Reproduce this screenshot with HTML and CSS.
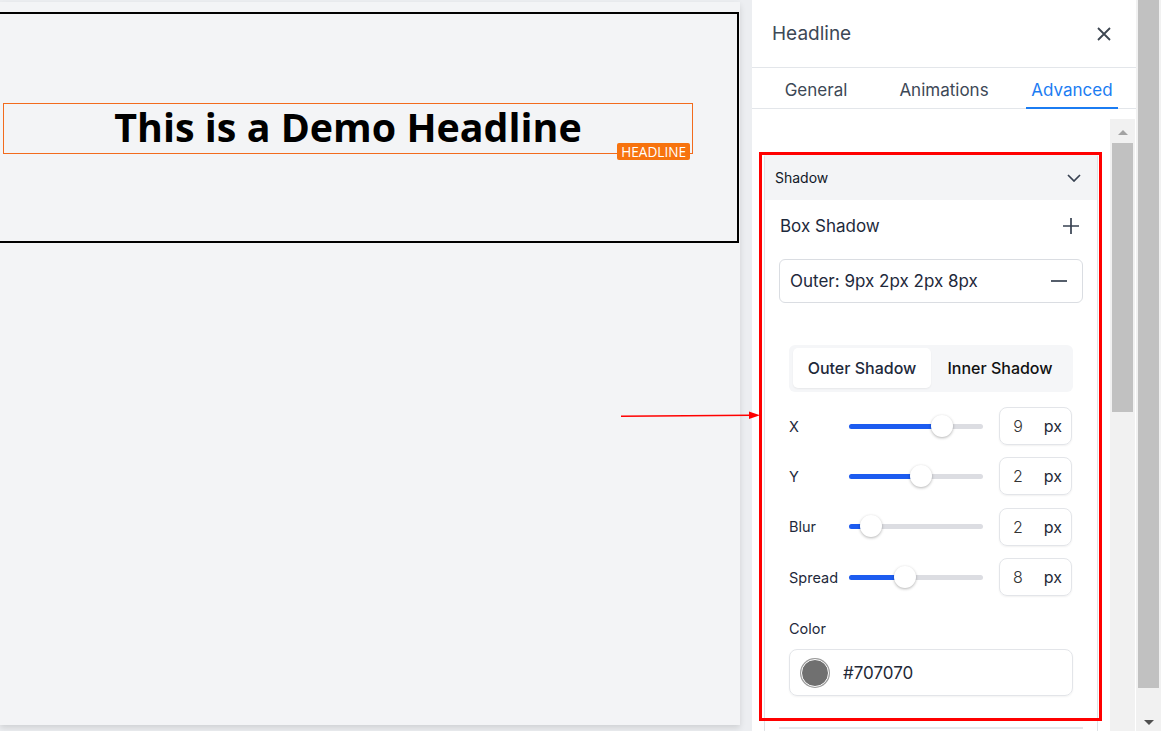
FILE: index.html
```html
<!DOCTYPE html>
<html lang="en">

<head>
    <meta charset="UTF-8">
    <meta name="viewport" content="width=device-width, initial-scale=1.0">
    <title>Headline - Advanced</title>
    <link rel="stylesheet" href="styles.css">
</head>

<body>
    <div class="app">
        <main class="stage">
            <div class="page">
                <section class="block">
                    <div class="headline-box">
                        <h1 class="headline">This is a Demo Headline</h1>
                        <span class="badge">HEADLINE</span>
                    </div>
                </section>
            </div>
        </main>

        <aside class="panel">
            <header class="panel-head">
                <span class="panel-title">Headline</span>
                <svg class="icon-close" width="14" height="14" viewBox="0 0 14 14">
                    <path d="M1 1L13 13M13 1L1 13" />
                </svg>
            </header>

            <nav class="tabs">
                <div class="tab"><span>General</span></div>
                <div class="tab"><span>Animations</span></div>
                <div class="tab active"><span>Advanced</span></div>
            </nav>

            <div class="panel-body">
                <div class="panel-scroll">
                    <div class="card">
                        <div class="card-head">
                            <span>Shadow</span>
                            <svg class="icon-line" width="14" height="8" viewBox="0 0 14 8">
                                <path d="M1 1L7 7L13 1" />
                            </svg>
                        </div>

                        <div class="card-body">
                            <div class="row-title">
                                <span>Box Shadow</span>
                                <svg class="icon-line" width="16" height="16" viewBox="0 0 16 16">
                                    <path d="M8 0V16M0 8H16" />
                                </svg>
                            </div>

                            <div class="shadow-item">
                                <span>Outer: 9px 2px 2px 8px</span>
                                <svg class="icon-line" width="16" height="4" viewBox="0 0 16 4">
                                    <path d="M0 2H16" />
                                </svg>
                            </div>

                            <div class="editor">
                                <div class="segmented">
                                    <div class="seg active">Outer Shadow</div>
                                    <div class="seg">Inner Shadow</div>
                                </div>

                                <div class="sliders">
                                    <div class="slider-row">
                                        <span class="slider-label">X</span>
                                        <div class="track">
                                            <div class="fill" style="width: 93px;"></div>
                                            <div class="thumb" style="left: 82px;"></div>
                                        </div>
                                        <div class="num"><span class="val">9</span><span class="unit">px</span></div>
                                    </div>
                                    <div class="slider-row">
                                        <span class="slider-label">Y</span>
                                        <div class="track">
                                            <div class="fill" style="width: 72px;"></div>
                                            <div class="thumb" style="left: 61px;"></div>
                                        </div>
                                        <div class="num"><span class="val">2</span><span class="unit">px</span></div>
                                    </div>
                                    <div class="slider-row">
                                        <span class="slider-label">Blur</span>
                                        <div class="track">
                                            <div class="fill" style="width: 21px;"></div>
                                            <div class="thumb" style="left: 11px;"></div>
                                        </div>
                                        <div class="num"><span class="val">2</span><span class="unit">px</span></div>
                                    </div>
                                    <div class="slider-row">
                                        <span class="slider-label">Spread</span>
                                        <div class="track">
                                            <div class="fill" style="width: 56px;"></div>
                                            <div class="thumb" style="left: 45px;"></div>
                                        </div>
                                        <div class="num"><span class="val">8</span><span class="unit">px</span></div>
                                    </div>
                                </div>

                                <div class="color-label">Color</div>
                                <div class="color-field">
                                    <span class="swatch"></span>
                                    <span>#707070</span>
                                </div>
                            </div>

                            <div class="divider"></div>
                        </div>
                    </div>
                </div>

                <div class="vscroll">
                    <span class="arrow-up"></span>
                    <div class="vthumb"></div>
                </div>
            </div>
        </aside>

        <div class="win-scroll">
            <div class="win-thumb"></div>
            <span class="arrow-down"></span>
        </div>

        <!-- annotation overlay -->
        <div class="annot-box"></div>
        <svg class="annot-arrow" width="150" height="20" viewBox="0 0 150 20">
            <path d="M6 11.3L136 10.3" stroke="#ff0000" stroke-width="1.6" fill="none" />
            <polygon points="134,6.5 145,10.3 134,14" fill="#ff0000" />
        </svg>
    </div>
</body>
</html>
```

FILE: styles.css
```css
* {
    box-sizing: border-box;
}

body {
    margin: 0;
    font-family: Inter, 'Noto Sans', sans-serif;
    color: #1e293b;
    overflow: hidden;
}

.app {
    position: relative;
    display: flex;
    width: 1161px;
    height: 731px;
}

/* canvas side */
.stage {
    flex: none;
    width: 752px;
    padding-top: 2px;
    background-color: #eceef1;
}

.page {
    width: 740px;
    height: 723px;
    padding-top: 10px;
    background-color: #f3f4f6;
    box-shadow: 0 3px 6px rgba(0, 0, 0, 0.12);
}

.block {
    display: flex;
    align-items: center;
    width: 741px;
    height: 231px;
    margin-left: -2px;
    padding: 2px 0 0 3px;
    border: 2px solid #000;
}

.headline-box {
    position: relative;
    width: 690px;
    height: 51px;
    border: 1px solid #f26b1d;
    text-align: center;
}

.headline {
    margin: 0;
    font-family: 'Open Sans', sans-serif;
    font-weight: 700;
    font-size: 39.4px;
    line-height: 47px;
    color: #000;
}

.badge {
    position: absolute;
    right: 2px;
    top: 39px;
    height: 17px;
    padding: 0 4px;
    border-radius: 2px;
    background-color: #f7730e;
    color: #fff;
    font-family: 'Open Sans', sans-serif;
    font-size: 13.6px;
    line-height: 17px;
}

/* settings panel */
.panel {
    flex: none;
    display: flex;
    flex-direction: column;
    width: 384px;
    background-color: #fff;
}

.panel-head {
    display: flex;
    align-items: center;
    justify-content: space-between;
    height: 68px;
    padding: 0 25px 0 20px;
    border-bottom: 1px solid #e3e6ea;
}

.panel-title {
    font-size: 19px;
    color: #3d4856;
}

.icon-close path {
    stroke: #3d4651;
    stroke-width: 1.8;
    fill: none;
}

.icon-line path {
    stroke: #374151;
    stroke-width: 1.7;
    fill: none;
}

.tabs {
    display: grid;
    grid-template-columns: repeat(3, 128px);
    height: 41px;
    border-bottom: 1px solid #e3e6ea;
}

.tab {
    display: flex;
    justify-content: center;
}

.tab span {
    height: 41px;
    margin-bottom: -1px;
    padding: 12px 5px 7px;
    font-size: 17px;
    line-height: 20px;
    color: #3d4856;
    border-bottom: 2px solid transparent;
}

.tab.active span {
    color: #1b7cf2;
    border-bottom-color: #1b7cf2;
}

.panel-body {
    flex: 1;
    display: flex;
    min-height: 0;
    padding-top: 10px;
    overflow: hidden;
}

.panel-scroll {
    flex: 1;
    padding: 35px 12px 0;
    overflow: hidden;
}

.card {
    border: 1px solid #dfe2e6;
    border-radius: 3px;
}

.card-head {
    display: flex;
    align-items: center;
    justify-content: space-between;
    height: 45px;
    padding: 0 16px 0 10px;
    background-color: #f3f4f6;
    font-size: 14px;
    color: #111827;
}

.card-body {
    padding: 0 14px 20px;
}

.row-title {
    display: flex;
    align-items: center;
    justify-content: space-between;
    height: 52px;
    padding: 0 4px 0 1px;
    font-size: 17px;
    color: #1e293b;
}

.shadow-item {
    display: flex;
    align-items: center;
    justify-content: space-between;
    height: 44px;
    margin-top: 7px;
    padding: 0 15px 0 10px;
    border: 1px solid #dadde2;
    border-radius: 6px;
    font-size: 17px;
}

.editor {
    margin-top: 42px;
    padding: 0 10px;
}

.segmented {
    display: flex;
    height: 47px;
    padding: 3px 4px 4px;
    border-radius: 6px;
    background-color: #f5f6f8;
}

.seg {
    flex: 1;
    display: flex;
    align-items: center;
    justify-content: center;
    border-radius: 5px;
    font-size: 16px;
    font-weight: 500;
    color: #111;
}

.seg.active {
    background-color: #fff;
    color: #1e293b;
    box-shadow: 0 1px 2px rgba(0, 0, 0, 0.06);
}

.sliders {
    display: flex;
    flex-direction: column;
    gap: 12.4px;
    margin-top: 15px;
}

.slider-row {
    display: flex;
    align-items: center;
    height: 38px;
}

.slider-label {
    width: 60px;
    font-size: 14.5px;
    color: #1e293b;
}

.track {
    position: relative;
    width: 134px;
    height: 5px;
    border-radius: 3px;
    background-color: #dcdde2;
}

.fill {
    height: 100%;
    border-radius: 3px;
    background-color: #1d5cf0;
}

.thumb {
    position: absolute;
    top: -9px;
    width: 22px;
    height: 22px;
    border-radius: 50%;
    background-color: #fff;
    box-shadow: 0 1px 3px rgba(0, 0, 0, 0.3);
}

.num {
    display: flex;
    align-items: center;
    width: 73px;
    height: 38px;
    margin-left: 16px;
    padding-right: 9px;
    border: 1px solid #e3e5e9;
    border-radius: 8px;
    box-shadow: 0 1px 2px rgba(0, 0, 0, 0.06);
    font-size: 16px;
}

.val {
    width: 36px;
    text-align: center;
    color: #333;
    font-weight: 300;
}

.unit {
    margin-left: auto;
    color: #1f2937;
}

.color-label {
    margin-top: 23px;
    font-size: 14.5px;
    line-height: 20px;
}

.color-field {
    display: flex;
    align-items: center;
    gap: 14px;
    height: 47px;
    margin-top: 10px;
    padding-left: 11px;
    border: 1px solid #e3e5e9;
    border-radius: 8px;
    box-shadow: 0 1px 2px rgba(0, 0, 0, 0.05);
    font-size: 17px;
    color: #1f2937;
}

.swatch {
    width: 28px;
    height: 28px;
    border: 1px solid #fff;
    border-radius: 50%;
    background-color: #707070;
    box-shadow: 0 0 0 1px #9b9b9b;
}

.divider {
    height: 2px;
    margin-top: 31px;
    background-color: #e5e7eb;
}

/* scrollbars */
.vscroll {
    flex: none;
    display: flex;
    flex-direction: column;
    align-items: center;
    width: 25px;
    margin-right: 1px;
    background-color: #f1f1f1;
}

.arrow-up {
    margin-top: 11px;
    border-left: 5px solid transparent;
    border-right: 5px solid transparent;
    border-bottom: 5px solid #a3a3a3;
}

.vthumb {
    width: 21px;
    height: 269px;
    margin-top: 8px;
    background-color: #c1c1c1;
}

.win-scroll {
    flex: none;
    display: flex;
    flex-direction: column;
    align-items: center;
    width: 25px;
    padding: 0 2px;
    background-color: #f1f1f1;
}

.win-thumb {
    width: 21px;
    height: 688px;
    background-color: #c1c1c1;
}

.arrow-down {
    margin-top: 32px;
    border-left: 5px solid transparent;
    border-right: 5px solid transparent;
    border-top: 5px solid #505050;
}

/* red annotation */
.annot-box {
    position: absolute;
    left: 759px;
    top: 152px;
    width: 343px;
    height: 569px;
    border: 3px solid #ff0000;
    pointer-events: none;
}

.annot-arrow {
    position: absolute;
    left: 615px;
    top: 405px;
}
```
